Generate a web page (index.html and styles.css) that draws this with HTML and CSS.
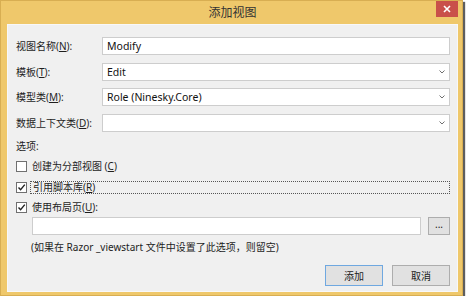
FILE: index.html
```html
<!DOCTYPE html>
<html lang="zh-CN">

<head>
	<meta charset="utf-8" />
	<title>添加视图</title>
	<link rel="stylesheet" href="styles.css">
</head>

<body>
	<div class="window">
		<div class="titlebar">
			<div class="title">添加视图</div>
			<button class="close" title="关闭">
				<svg width="8" height="8" viewBox="0 0 8 8"><path d="M1 1L7 7M7 1L1 7" stroke="#fff" stroke-width="1.6"/></svg>
			</button>
		</div>
		<div class="client">
			<div class="fields">
				<label class="field-label">视图名称(<u>N</u>):</label>
				<div class="box">Modify</div>

				<label class="field-label">模板(<u>T</u>):</label>
				<div class="box combo">Edit<span class="arrow"><svg width="6" height="4" viewBox="0 0 6 4"><path d="M0.5 0.5L3 3L5.5 0.5" fill="none" stroke="#707070" stroke-width="1"/></svg></span></div>

				<label class="field-label">模型类(<u>M</u>):</label>
				<div class="box combo">Role (Ninesky.Core)<span class="arrow"><svg width="6" height="4" viewBox="0 0 6 4"><path d="M0.5 0.5L3 3L5.5 0.5" fill="none" stroke="#707070" stroke-width="1"/></svg></span></div>

				<label class="field-label">数据上下文类(<u>D</u>):</label>
				<div class="box combo"><span class="arrow"><svg width="6" height="4" viewBox="0 0 6 4"><path d="M0.5 0.5L3 3L5.5 0.5" fill="none" stroke="#707070" stroke-width="1"/></svg></span></div>
			</div>

			<div class="section">选项:</div>

			<div class="check-row">
				<span class="check"></span>
				<span class="check-text">创建为分部视图 (<u>C</u>)</span>
			</div>
			<div class="check-row">
				<span class="check checked"><svg width="9" height="9" viewBox="0 0 9 9"><path d="M1.5 4.5L3.6 6.8L7.8 1.6" fill="none" stroke="#222" stroke-width="1.4"/></svg></span>
				<span class="check-text focus">引用脚本库(<u>R</u>)</span>
			</div>
			<div class="check-row last">
				<span class="check checked"><svg width="9" height="9" viewBox="0 0 9 9"><path d="M1.5 4.5L3.6 6.8L7.8 1.6" fill="none" stroke="#222" stroke-width="1.4"/></svg></span>
				<span class="check-text">使用布局页(<u>U</u>):</span>
			</div>

			<div class="layout-row">
				<div class="box layout-path"></div>
				<button class="browse">...</button>
			</div>
			<div class="hint">(如果在 Razor _viewstart 文件中设置了此选项，则留空)</div>

			<div class="actions">
				<button class="btn default">添加</button>
				<button class="btn">取消</button>
			</div>
		</div>
	</div>
</body>

</html>
```

FILE: styles.css
```css
body {
	margin: 0;
	background: #fff;
	font-family: "Noto Sans", "Noto Sans CJK SC", sans-serif;
	font-size: 10px;
	color: #1e1e1e;
}

.window {
	width: 463px;
	height: 296px;
	box-sizing: border-box;
	background: #efc86b;
	border: 1px solid #d8ae52;
	box-shadow: 2px 2px 1px rgba(40, 40, 40, 0.75);
	display: flex;
	flex-direction: column;
	padding: 0 4px 3px 6px;
}

.titlebar {
	height: 23px;
	display: grid;
	grid-template-columns: 22px 1fr 22px;
	align-items: start;
}

.title {
	grid-column: 2;
	text-align: center;
	font-family: "Noto Sans CJK SC", sans-serif;
	font-size: 12px;
	line-height: 22px;
	color: #333;
}

.close {
	grid-column: 3;
	width: 22px;
	height: 16px;
	margin: 0;
	padding: 0;
	border: none;
	background: #c9504a;
	display: flex;
	align-items: center;
	justify-content: center;
}

.client {
	flex: 1;
	background: #f0f0f0;
	border: 1px solid #f8f8f8;
	padding: 12px 7px 0 8px;
	display: flex;
	flex-direction: column;
}

.fields {
	display: grid;
	grid-template-columns: 86px 1fr;
	row-gap: 7.7px;
}

.field-label {
	line-height: 18px;
	height: 18px;
}

.box {
	height: 18px;
	box-sizing: border-box;
	background: #fff;
	border: 1px solid #cdcdcd;
	padding-left: 4px;
	line-height: 16px;
	font-size: 10.5px;
	color: #111;
	position: relative;
}

.combo .arrow {
	position: absolute;
	right: 4px;
	top: 6px;
	line-height: 0;
}

.section {
	margin-top: 6px;
	height: 18px;
	line-height: 16px;
}

.check-row {
	height: 21px;
	display: flex;
	align-items: center;
}

.check-row.last {
	height: 19px;
}

.check {
	width: 11px;
	height: 11px;
	box-sizing: border-box;
	border: 1px solid #707070;
	background: #fff;
	display: flex;
	align-items: center;
	justify-content: center;
	margin-right: 3px;
}

.check-text {
	padding-left: 2px;
	line-height: 11px;
}

.check-text.focus {
	flex: 1;
	border: 1px dotted #555;
	margin-right: 0;
}

.layout-row {
	margin-top: 0;
	display: flex;
	gap: 7px;
	padding-left: 16px;
}

.layout-path {
	flex: 1;
}

.browse {
	width: 22px;
	height: 18px;
	margin: 0;
	padding: 0 0 4px;
	box-sizing: border-box;
	border: 1px solid #adadad;
	background: #e1e1e1;
	font: inherit;
	line-height: 10px;
	color: #222;
}

.hint {
	padding-left: 15px;
	margin-top: 5px;
	height: 14px;
	line-height: 14px;
}

.actions {
	margin-top: 11px;
	display: flex;
	justify-content: flex-end;
	gap: 9px;
}

.btn {
	width: 58px;
	height: 21px;
	margin: 0;
	padding: 0;
	box-sizing: border-box;
	border: 1px solid #adadad;
	background: #e1e1e1;
	font: inherit;
	color: #222;
}

.btn.default {
	border-color: #6fa8e0;
}
```
